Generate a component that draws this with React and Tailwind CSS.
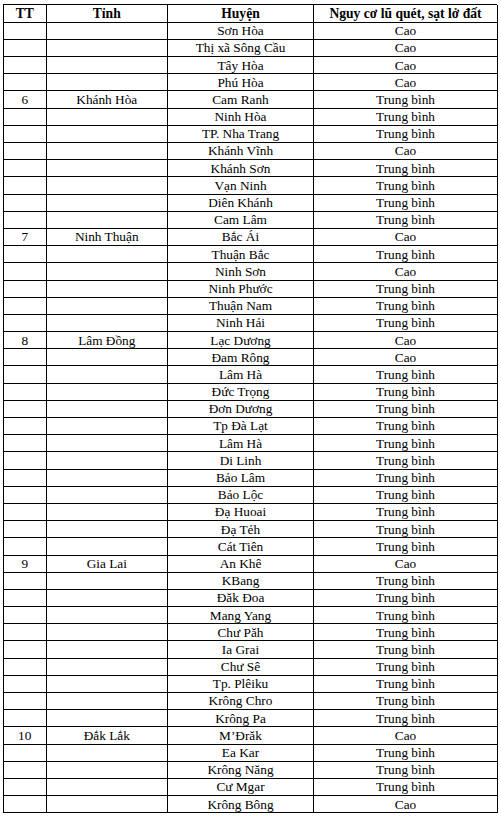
const rows = [
  ["", "", "Sơn Hòa", "Cao"],
  ["", "", "Thị xã Sông Cầu", "Cao"],
  ["", "", "Tây Hòa", "Cao"],
  ["", "", "Phú Hòa", "Cao"],
  ["6", "Khánh Hòa", "Cam Ranh", "Trung bình"],
  ["", "", "Ninh Hòa", "Trung bình"],
  ["", "", "TP. Nha Trang", "Trung bình"],
  ["", "", "Khánh Vĩnh", "Cao"],
  ["", "", "Khánh Sơn", "Trung bình"],
  ["", "", "Vạn Ninh", "Trung bình"],
  ["", "", "Diên Khánh", "Trung bình"],
  ["", "", "Cam Lâm", "Trung bình"],
  ["7", "Ninh Thuận", "Bắc Ái", "Cao"],
  ["", "", "Thuận Bắc", "Trung bình"],
  ["", "", "Ninh Sơn", "Cao"],
  ["", "", "Ninh Phước", "Trung bình"],
  ["", "", "Thuận Nam", "Trung bình"],
  ["", "", "Ninh Hải", "Trung bình"],
  ["8", "Lâm Đồng", "Lạc Dương", "Cao"],
  ["", "", "Đam Rông", "Cao"],
  ["", "", "Lâm Hà", "Trung bình"],
  ["", "", "Đức Trọng", "Trung bình"],
  ["", "", "Đơn Dương", "Trung bình"],
  ["", "", "Tp Đà Lạt", "Trung bình"],
  ["", "", "Lâm Hà", "Trung bình"],
  ["", "", "Di Linh", "Trung bình"],
  ["", "", "Bảo Lâm", "Trung bình"],
  ["", "", "Bảo Lộc", "Trung bình"],
  ["", "", "Đạ Huoai", "Trung bình"],
  ["", "", "Đạ Tẻh", "Trung bình"],
  ["", "", "Cát Tiên", "Trung bình"],
  ["9", "Gia Lai", "An Khê", "Cao"],
  ["", "", "KBang", "Trung bình"],
  ["", "", "Đăk Đoa", "Trung bình"],
  ["", "", "Mang Yang", "Trung bình"],
  ["", "", "Chư Păh", "Trung bình"],
  ["", "", "Ia Grai", "Trung bình"],
  ["", "", "Chư Sê", "Trung bình"],
  ["", "", "Tp. Plêiku", "Trung bình"],
  ["", "", "Krông Chro", "Trung bình"],
  ["", "", "Krông Pa", "Trung bình"],
  ["10", "Đắk Lắk", "M’Đrăk", "Cao"],
  ["", "", "Ea Kar", "Trung bình"],
  ["", "", "Krông Năng", "Trung bình"],
  ["", "", "Cư Mgar", "Trung bình"],
  ["", "", "Krông Bông", "Cao"],
];

const headers = ["TT", "Tỉnh", "Huyện", "Nguy cơ lũ quét, sạt lở đất"];

export default function App() {
  return (
    <div className="min-h-[821px] bg-white pl-[3px] pt-[4px] font-['Liberation_Serif','Times_New_Roman',serif] text-black">
      {/* bảng: TT | Tỉnh | Huyện | Nguy cơ */}
      <div className="grid w-[494px] grid-cols-[42.5px_121.5px_146px_184px] grid-rows-[17.7px] auto-rows-[17.2px] border-l border-t border-black">
        {headers.map((h) => (
          <div
            key={h}
            className="flex items-center justify-center whitespace-nowrap border-b border-r border-black text-[13.6px] font-bold leading-none"
          >
            {h}
          </div>
        ))}
        {rows.map((r, i) =>
          r.map((cell, j) => (
            <div
              key={i + "-" + j}
              className="flex items-center justify-center whitespace-nowrap border-b border-r border-black text-[13.3px] leading-none"
            >
              {cell}
            </div>
          ))
        )}
      </div>
    </div>
  );
}
